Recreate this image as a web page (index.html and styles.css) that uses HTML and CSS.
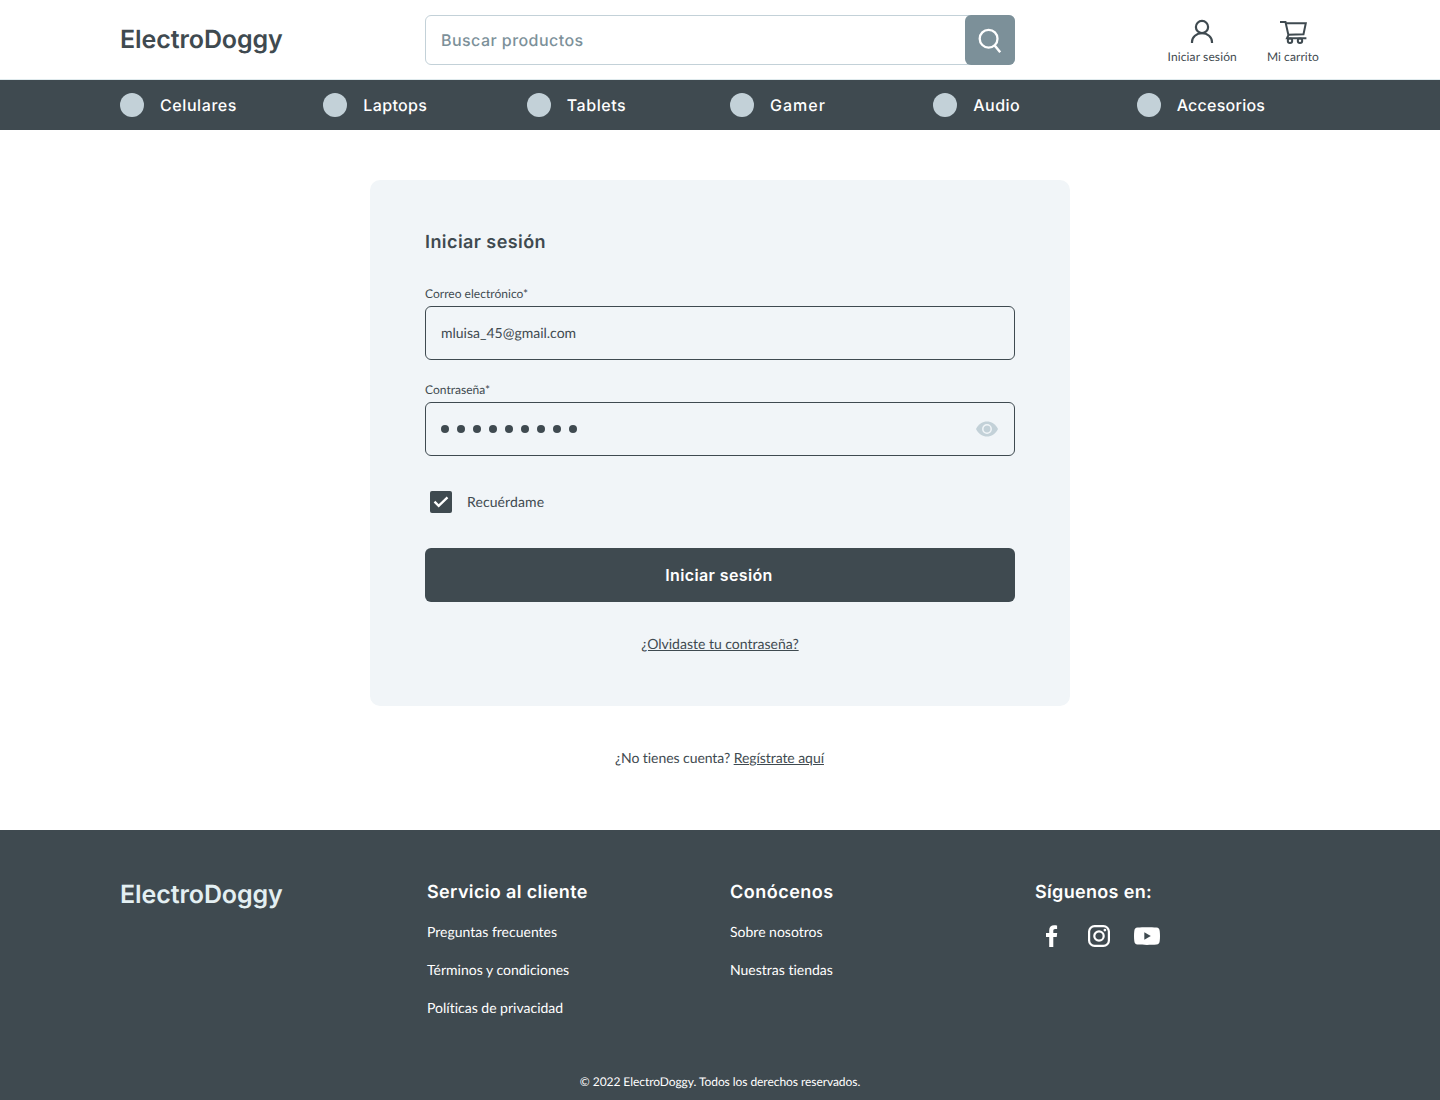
FILE: index.html
```html
<!DOCTYPE html>
<html lang="es">
<head>
<meta charset="utf-8">
<title>ElectroDoggy - Iniciar sesión</title>
<link rel="stylesheet" href="styles.css">
</head>
<body>
<header class="header">
  <a class="logo">ElectroDoggy</a>
  <form class="search">
    <span class="search-text">Buscar productos</span>
    <span class="search-button"><svg width="50" height="50" viewBox="0 0 50 50" fill="none" stroke="#fff" stroke-width="2.3"><circle cx="23.6" cy="23.7" r="8.900"/><path d="M29.500 30.300l5.700 7" stroke-width="2.500"/></svg></span>
  </form>
  <div class="actions">
    <a class="action"><svg width="28" height="28" viewBox="0 0 28 28" fill="none" stroke="#3f4a50" stroke-width="2.200"><circle cx="14" cy="9" r="6.100"/><path d="M4 25v-1c0-5 4.500-8.800 10-8.800s10 3.800 10 8.800v1"/></svg><span class="action-text action-login">Iniciar sesión</span></a>
    <a class="action"><svg width="28" height="28" viewBox="0 0 28 28" fill="none" stroke="#3f4a50" stroke-width="2"><path d="M1 4h5.500l3 13.500M6.800 5.200h20L24.500 16.200l-15.500.5M9.500 17l-1.500 3.200h19.400"/><circle cx="11" cy="22.800" r="2.200"/><circle cx="21" cy="22.800" r="2.200"/></svg><span class="action-text action-cart">Mi carrito</span></a>
  </div>
</header>
<nav class="nav">
  <a class="nav-item"><i class="dot"></i><span class="n1">Celulares</span></a>
  <a class="nav-item"><i class="dot"></i><span class="n2">Laptops</span></a>
  <a class="nav-item"><i class="dot"></i><span class="n3">Tablets</span></a>
  <a class="nav-item"><i class="dot"></i><span class="n4">Gamer</span></a>
  <a class="nav-item"><i class="dot"></i><span class="n5">Audio</span></a>
  <a class="nav-item"><i class="dot"></i><span class="n6">Accesorios</span></a>
</nav>
<main class="main">
  <section class="card">
    <h1 class="title">Iniciar sesión</h1>
    <label class="label">Correo electrónico*</label>
    <div class="field">mluisa_45@gmail.com</div>
    <label class="label">Contraseña*</label>
    <div class="field password">
      <span class="bullets"><i></i><i></i><i></i><i></i><i></i><i></i><i></i><i></i><i></i></span>
      <svg width="22" height="17" viewBox="0 0 22 17"><path d="M0 8C3 2.500 6.500.5 11 .5S19 2.500 22 8c-3 5.500-6.500 7.500-11 7.500S3 13.500 0 8z" fill="#c3d1d8"/><circle cx="11" cy="8" r="4.200" fill="none" stroke="#f1f5f8" stroke-width="1.500"/></svg>
    </div>
    <div class="remember"><span class="check"><svg width="22" height="22" viewBox="0 0 22 22" fill="none" stroke="#fff" stroke-width="2.300"><path d="M4.500 10.600l4.200 4.200 8.800-8.400"/></svg></span>Recuérdame</div>
    <button class="submit">Iniciar sesión</button>
    <a class="forgot">¿Olvidaste tu contraseña?</a>
  </section>
  <p class="register">¿No tienes cuenta? <a class="link">Regístrate aquí</a></p>
</main>
<footer class="footer">
  <div class="footer-grid">
    <a class="logo logo-light">ElectroDoggy</a>
    <div class="column"><h2 class="heading h-service">Servicio al cliente</h2><a>Preguntas frecuentes</a><a>Términos y condiciones</a><a>Políticas de privacidad</a></div>
    <div class="column"><h2 class="heading h-about">Conócenos</h2><a>Sobre nosotros</a><a>Nuestras tiendas</a></div>
    <div class="column"><h2 class="heading h-follow">Síguenos en:</h2>
      <div class="social">
        <svg width="12" height="22" viewBox="0 0 12 22" fill="#fff"><path d="M3.200 22V12H0V8.100h3.200V5.200C3.200 2 5.100.2 8.100.2c1.300 0 2.500.1 3 .2v3.500H9.200c-1.500 0-1.900.8-1.900 1.900v2.300h3.900l-.5 3.900H7.300v10z"/></svg>
        <svg width="22" height="22" viewBox="0 0 22 22" fill="none" stroke="#fff" stroke-width="2.200"><rect x="1.100" y="1.100" width="19.800" height="19.800" rx="5.500"/><circle cx="11" cy="11" r="4.700"/><circle cx="16.900" cy="5.100" r="1.400" fill="#fff" stroke="none"/></svg>
        <svg width="26" height="18" viewBox="0 0 26 18"><path d="M3.500.5C9 0 17 0 22.500.5c2 .2 3 1.300 3.200 3.500.4 3.300.4 6.700 0 10-.2 2.200-1.200 3.300-3.200 3.500C17 18 9 18 3.500 17.500 1.500 17.300.5 16.200.3 14-.1 10.700-.1 7.300.3 4 .5 1.800 1.500.7 3.500.5z" fill="#fff"/><path d="M10.300 5.300v7.400L16.800 9z" fill="#3f4a50"/></svg>
      </div>
    </div>
  </div>
  <p class="copyright">© 2022 ElectroDoggy. Todos los derechos reservados.</p>
</footer>
</body>
</html>
```
FILE: styles.css
```css
* { box-sizing: border-box; }
body { margin: 0; width: 1440px; height: 1100px; display: flex; flex-direction: column; background: #fff; color: #3f4a50; font: 14px/20px Lato, sans-serif; font-variant-ligatures: none; text-rendering: geometricPrecision; }
h1, h2, p { margin: 0; }
svg { display: block; flex: none; }
.header { height: 80px; padding: 0 120px; display: grid; grid-template-columns: 305px 590px 1fr; align-items: center; border-bottom: 1px solid #dfeaed; }
.logo { font: 600 25px/36px Inter, sans-serif; letter-spacing: -0.08px; white-space: nowrap; }
.search { height: 50px; margin-top: 1px; display: flex; align-items: center; justify-content: space-between; border: 1px solid #c3d1d8; border-radius: 6px; padding-left: 15px; font: 500 16px/24px Inter, sans-serif; letter-spacing: 0.45px; color: #7c9099; }
.search-button { margin: -1px; width: 50px; height: 50px; background: #7c9099; border-radius: 6px; }
.actions { display: flex; justify-content: flex-end; gap: 30px; padding: 6px 1px 0 0; }
.action { display: flex; flex-direction: column; align-items: center; font-size: 12px; line-height: 20px; white-space: nowrap; }
.action svg { margin-bottom: 1px; }
.action-login { letter-spacing: 0.12px; }
.action-cart { letter-spacing: 0.07px; }
.nav { height: 50px; padding: 0 100px 0 120px; background: #3f4a50; color: #fff; display: grid; grid-template-columns: repeat(6, 203.33px); font: 500 16px/24px Inter, sans-serif; }
.nav-item { display: flex; align-items: center; gap: 16px; }
.n1, .n3 { letter-spacing: 0.58px; }
.n2 { letter-spacing: 0.36px; }
.n4 { letter-spacing: 1px; }
.n5 { letter-spacing: 0.45px; }
.n6 { letter-spacing: 0.25px; }
.dot { width: 24px; height: 24px; border-radius: 50%; background: #c3d1d8; }
.main { height: 700px; padding-top: 50px; display: flex; flex-direction: column; align-items: center; }
.card { width: 700px; height: 526px; padding: 49px 55px 0; background: #f1f5f8; border-radius: 10px; display: flex; flex-direction: column; }
.title { font: 600 18px/28px Inter, sans-serif; letter-spacing: 0.43px; margin-bottom: 28px; }
.label { font-size: 12px; line-height: 18px; margin-bottom: 3px; letter-spacing: 0.03px; }
.field { height: 54px; flex: none; border: 1px solid #3f4a50; border-radius: 6px; padding: 0 16px 0 15px; display: flex; align-items: center; justify-content: space-between; margin-bottom: 21px; }
.bullets { display: flex; gap: 8px; }
.bullets i { width: 8px; height: 8px; border-radius: 50%; background: #3f4a50; }
.password { margin-bottom: 35px; }
.remember { display: flex; align-items: center; gap: 15px; height: 22px; padding-left: 5px; margin-bottom: 35px; letter-spacing: 0.1px; }
.check { width: 22px; height: 22px; background: #3f4a50; border-radius: 2px; }
.submit { height: 54px; border: 0; border-radius: 6px; background: #3f4a50; color: #fff; font: 600 16px/24px Inter, sans-serif; letter-spacing: 0.38px; padding: 0 2px 0 0; margin-bottom: 32px; }
.forgot { align-self: center; text-decoration: underline; }
.register { margin-top: 42px; padding-right: 1px; letter-spacing: -0.06px; }
.link { text-decoration: underline; }
.footer { height: 270px; background: #3f4a50; color: #fff; padding: 0 120px; }
.footer-grid { height: 242px; padding-top: 47px; display: grid; grid-template-columns: 307px 303px 305px 1fr; align-items: start; }
.logo-light { color: #e3eff2; }
.column { display: flex; flex-direction: column; gap: 18px; padding-top: 2px; }
.heading { font: 600 18px/28px Inter, sans-serif; margin-bottom: -3px; white-space: nowrap; }
.h-service { letter-spacing: 0.37px; }
.h-about { letter-spacing: 0.5px; }
.h-follow { letter-spacing: 0.33px; }
.social { display: flex; align-items: center; padding-left: 11px; margin-top: 3px; }
.social svg + svg { margin-left: 30px; }
.social svg + svg + svg { margin-left: 24px; }
.copyright { text-align: center; font-size: 12px; line-height: 20px; letter-spacing: -0.06px; }
```
